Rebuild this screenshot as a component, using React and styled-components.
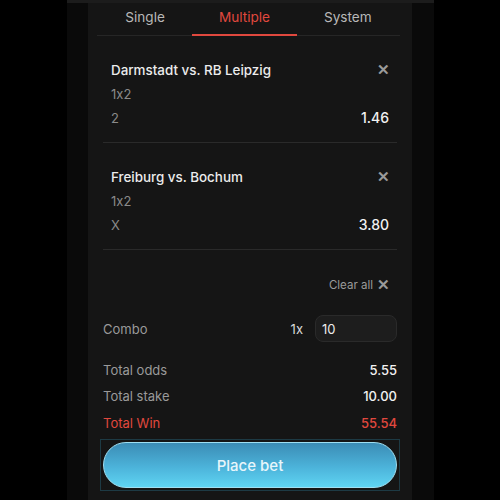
import React from "react";
import styled, { createGlobalStyle } from "styled-components";

const Global = createGlobalStyle`
  html, body { margin: 0; padding: 0; background: #000; }
  body {
    font-family: Inter, "Noto Sans", sans-serif;
    font-feature-settings: "calt" 0;
  }
`;

const Page = styled.div`
  width: 500px;
  height: 500px;
  background: #000;
  display: flex;
  justify-content: center;
  overflow: hidden;
`;

const Frame = styled.div`
  width: 367px;
  height: 500px;
  background: #0a0a0a;
  border-top: 3px solid #1c1c1c;
  box-sizing: border-box;
  display: flex;
  justify-content: center;
`;

const Panel = styled.div`
  width: 324px;
  background: #151515;
  display: flex;
  flex-direction: column;
`;

const Tabs = styled.div`
  display: flex;
  justify-content: center;
  margin: 0 12px 0 9px;
  border-bottom: 1px solid #262626;
  height: 32px;
`;

const Tab = styled.div`
  padding: 6px 27px 0;
  text-align: center;
  font-size: 13.6px;
  color: ${p => (p.$active ? "#e0483e" : "#b8b8b8")};
  border-bottom: 2px solid ${p => (p.$active ? "#e0483e" : "transparent")};
  margin-bottom: -1px;
  box-sizing: border-box;
`;

const Bet = styled.div`
  margin: 0 15px;
  padding: 26px 7px 17px 8px;
  border-bottom: 1px solid #2a2a2a;
  display: flex;
  flex-direction: column;
  gap: 9px;
  &:first-of-type { padding-top: 25px; }
`;

const Row = styled.div`
  display: flex;
  justify-content: space-between;
  align-items: center;
  height: 15px;
`;

const Title = styled.div`
  font-size: 13.4px;
  font-weight: 500;
  color: #ececec;
`;

const Muted = styled.div`
  font-size: 13px;
  color: #8a8a8a;
`;

const Odds = styled.div`
  font-size: 14px;
  font-weight: 500;
  color: #f2f2f2;
  margin-right: 1px;
`;

const Close = styled.span`
  font-size: 15px;
  font-weight: 700;
  color: #9a9a9a;
`;

const ClearRow = styled.div`
  display: flex;
  justify-content: flex-end;
  align-items: center;
  gap: 4px;
  margin: 25px 22px 0 0;
  font-size: 11.5px;
  color: #9a9a9a;
`;

const ComboRow = styled.div`
  display: flex;
  align-items: center;
  margin: 21px 15px 0;
`;

const ComboLabel = styled.div`
  flex: 1;
  font-size: 13px;
  color: #9a9a9a;
`;

const Mult = styled.div`
  font-size: 13px;
  color: #d8d8d8;
  margin-right: 12px;
`;

const Input = styled.div`
  width: 82px;
  height: 27px;
  box-sizing: border-box;
  border: 1px solid #2a2a2a;
  background: #1d1d1d;
  border-radius: 8px;
  font-size: 13px;
  color: #ececec;
  display: flex;
  align-items: center;
  padding-left: 6px;
`;

const Totals = styled.div`
  margin: 20px 15px 0;
  display: flex;
  flex-direction: column;
  gap: 11.5px;
`;

const TotalRow = styled.div`
  display: flex;
  justify-content: space-between;
  font-size: 13px;
  height: 15px;
  align-items: center;
  color: ${p => (p.$win ? "#e0483e" : "#9a9a9a")};
  & > b {
    font-weight: 500;
    color: ${p => (p.$win ? "#e0483e" : "#f2f2f2")};
  }
`;

const ButtonBox = styled.div`
  margin: 9px 12px 0;
  padding: 2px;
  border: 1px solid #1d3a44;
`;

const PlaceBet = styled.button`
  width: 100%;
  height: 46px;
  border-radius: 23px;
  border: 1px solid #9fdff2;
  background: linear-gradient(180deg, #3b8cb5 0%, #4cb3da 55%, #5fd4f2 100%);
  color: #e8f6fb;
  font-family: inherit;
  font-size: 15px;
  font-weight: 500;
  cursor: pointer;
`;

const bets = [
  { match: "Darmstadt vs. RB Leipzig", market: "1x2", pick: "2", odds: "1.46" },
  { match: "Freiburg vs. Bochum", market: "1x2", pick: "X", odds: "3.80" },
];

export default function App() {
  return (
    <Page>
      <Global />
      <Frame>
        <Panel>
          <Tabs>
            <Tab>Single</Tab>
            <Tab $active>Multiple</Tab>
            <Tab>System</Tab>
          </Tabs>
          {bets.map(b => (
            <Bet key={b.match}>
              <Row>
                <Title>{b.match}</Title>
                <Close>✕</Close>
              </Row>
              <Row>
                <Muted>{b.market}</Muted>
              </Row>
              <Row>
                <Muted>{b.pick}</Muted>
                <Odds>{b.odds}</Odds>
              </Row>
            </Bet>
          ))}
          <ClearRow>
            Clear all <Close>✕</Close>
          </ClearRow>
          <ComboRow>
            <ComboLabel>Combo</ComboLabel>
            <Mult>1x</Mult>
            <Input>10</Input>
          </ComboRow>
          <Totals>
            <TotalRow>Total odds<b>5.55</b></TotalRow>
            <TotalRow>Total stake<b>10.00</b></TotalRow>
            <TotalRow $win>Total Win<b>55.54</b></TotalRow>
          </Totals>
          <ButtonBox>
            <PlaceBet>Place bet</PlaceBet>
          </ButtonBox>
        </Panel>
      </Frame>
    </Page>
  );
}
